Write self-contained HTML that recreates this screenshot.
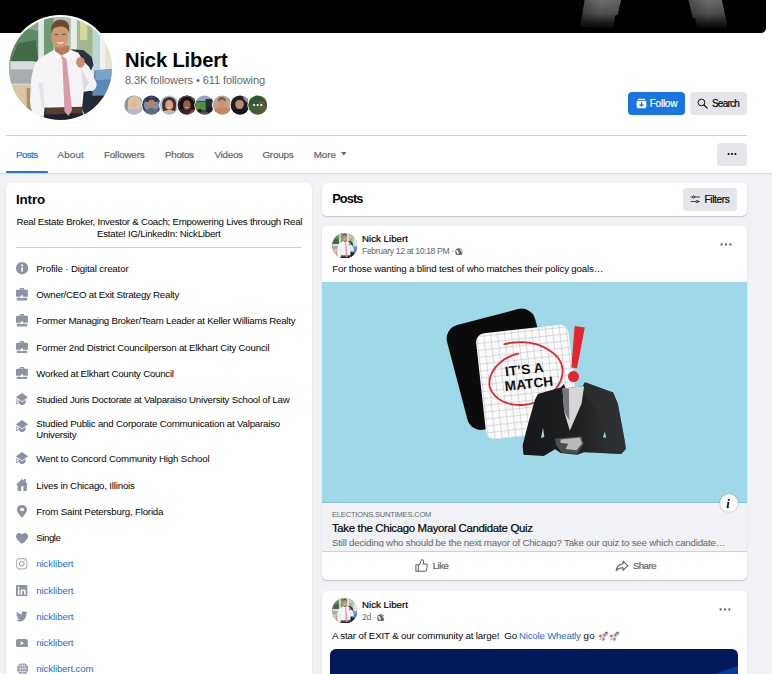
<!DOCTYPE html>
<html lang="en"><head><meta charset="utf-8"><title>Nick Libert | Facebook</title>
<style>
html,body{margin:0;padding:0}
body{width:772px;height:674px;overflow:hidden;background:#f0f2f5;font-family:"Liberation Sans",sans-serif;color:#050505}
.page{position:relative;width:772px;height:674px;overflow:hidden;background:#f0f2f5}
.t{position:absolute;white-space:nowrap;margin:0;padding:0;font-weight:400}
a{text-decoration:none;color:inherit}
.abs{position:absolute}
.card{position:absolute;background:#fff;border-radius:5px;box-shadow:0 1px 1.5px rgba(0,0,0,.2)}
.btn{position:absolute;border-radius:4px;background:#e4e6eb}
.ico{position:absolute;width:13.34px;height:13.34px;left:15.2px}
h1,h2,h3,p,ul,li{margin:0;padding:0;list-style:none}
</style></head><body><div class="page">
<header class="abs" style="left:0;top:0;width:772px;height:173px;background:#fff;box-shadow:0 1px 1px rgba(0,0,0,.1)">
<div class="abs" style="left:0;top:0;width:766px;height:33px;background:#000;border-radius:0 0 5px 0;overflow:hidden">
<svg width="766" height="33" viewBox="0 0 766 33" style="position:absolute;left:0;top:0">
<defs><linearGradient id="lg" x1="0" y1="0" x2="0" y2="1"><stop offset="0" stop-color="#727272"/><stop offset=".5" stop-color="#505050"/><stop offset=".8" stop-color="#1c1c1c"/><stop offset="1" stop-color="#000"/></linearGradient>
<linearGradient id="lh" x1="0" y1="0" x2="1" y2="0"><stop offset="0" stop-color="#000" stop-opacity=".3"/><stop offset=".5" stop-color="#000" stop-opacity="0"/><stop offset="1" stop-color="#000" stop-opacity=".1"/></linearGradient>
<filter id="bl" x="-10%" y="-10%" width="120%" height="120%"><feGaussianBlur stdDeviation=".5"/></filter></defs>
<g filter="url(#bl)"><polygon points="585,-2 621.500,-2 617.600,15 615.200,15.500 613.500,29 580,29" fill="url(#lg)"/><polygon points="585,-2 621.500,-2 617.600,15 615.200,15.500 613.500,29 580,29" fill="url(#lh)"/>
<polygon points="688,-2 721.500,-2 728,29 696.600,29 695.500,18.500 692.700,18" fill="url(#lg)"/><polygon points="688,-2 721.500,-2 728,29 696.600,29 695.500,18.500 692.700,18" fill="url(#lh)"/></g>
</svg></div>
<svg width="0" height="0" style="position:absolute"><defs>
<clipPath id="avc"><circle cx="51.500" cy="51.500" r="51.500"/></clipPath>
<filter id="ab" x="-5%" y="-5%" width="110%" height="110%"><feGaussianBlur stdDeviation="3"/></filter>
<symbol id="avart" viewBox="0 0 103 103"><g clip-path="url(#avc)"><g transform="translate(-9 -9) scale(.17803)">
<rect x="40" y="40" width="610" height="610" fill="#dde6e1"/>
<g filter="url(#ab)">
<polygon points="40,40 225,40 225,300 40,300" fill="#5f8b64"/>
<polygon points="40,40 225,40 225,130 120,110 40,170" fill="#86ad8c"/>
<polygon points="100,200 200,180 215,300 60,300" fill="#3f6a4a"/>
<rect x="215" y="40" width="32" height="260" fill="#dfe7e9"/>
<rect x="247" y="40" width="60" height="260" fill="#6f9a72"/>
<rect x="300" y="40" width="110" height="200" fill="#aebfae"/>
<rect x="398" y="40" width="34" height="280" fill="#e6ecec"/>
<rect x="432" y="60" width="90" height="250" fill="#9db78e"/>
<rect x="450" y="60" width="40" height="120" fill="#d9d79a"/>
<rect x="520" y="90" width="50" height="260" fill="#bcd6d6"/>
<rect x="562" y="100" width="30" height="260" fill="#eef2f0"/>
<rect x="592" y="150" width="60" height="220" fill="#e7e2d3"/>
<rect x="40" y="300" width="150" height="125" fill="#a7adaf"/>
<rect x="60" y="300" width="130" height="45" fill="#d9dddd"/>
<rect x="40" y="430" width="165" height="160" fill="#d9c6a5"/>
<rect x="150" y="450" width="40" height="130" fill="#b78d5c"/>
<polygon points="530,350 640,342 640,492 518,496" fill="#5b8ab8"/>
<polygon points="535,350 640,342 640,400 540,405" fill="#7aa3c9"/>
<polygon points="490,495 650,490 650,650 470,650" fill="#27292d"/>
<rect x="225" y="465" width="40" height="170" fill="#2b2a2a"/>
</g>
<polygon points="398,232 470,238 515,275 525,320 512,350 470,330 440,270" fill="#2b3142"/>
<polygon points="462,440 520,468 522,585 480,612 458,560" fill="#262c3c"/>
<path d="M300,236 L215,288 Q185,330 175,400 L168,520 Q170,580 200,612 L245,625 L250,560 L462,556 L470,470 L528,462 Q550,440 540,415 L500,330 L470,300 L440,252 L400,236 Z" fill="#f4f4f7"/>
<path d="M470,470 L452,330 L500,420 Z" fill="#dcdde3"/>
<path d="M215,420 L235,560 L250,560 L240,420 Z" fill="#e2e3e9"/>
<ellipse cx="452" cy="305" rx="24" ry="30" fill="#c98d70"/>
<polygon points="253,560 462,554 464,592 258,602" fill="#5a3b2c"/>
<polygon points="250,600 466,590 475,650 248,650" fill="#1d2230"/>
<polygon points="310,210 388,210 390,246 346,268 308,246" fill="#b67a5d"/>
<polygon points="338,262 364,257 374,290 405,575 384,606 362,580 350,292" fill="#d99ca8"/>
<polygon points="300,236 346,270 322,292" fill="#fff"/><polygon points="400,236 348,270 384,290" fill="#fff"/>
<ellipse cx="336" cy="160" rx="48" ry="63" fill="#d09774"/>
<path d="M288,140 Q282,80 325,68 Q375,58 388,100 L388,142 Q378,108 350,104 Q310,102 298,118 Z" fill="#6b4932"/>
<path d="M318,192 Q340,210 362,190 Q340,198 318,192Z" fill="#fff"/>
<path d="M306,150h22M348,148h22" stroke="#5a3a2a" stroke-width="5"/>
</g></g></symbol></defs></svg>
<div class="abs" style="left:7px;top:15px;width:107px;height:107px;border-radius:50%;background:#fff"></div>
<svg class="abs" style="left:9px;top:17px" width="103" height="103"><use href="#avart"/></svg>
<h1 class="t" style="left:125.00px;top:47.02px;font-size:20.2px;line-height:26.26px;color:#050505;font-weight:700;letter-spacing:-0.168px;">Nick Libert</h1>
<span class="t" style="left:125.00px;top:72.99px;font-size:11px;line-height:14.3px;color:#65676b;letter-spacing:-0.082px;">8.3K followers • 611 following</span>
<svg class="abs" style="left:122px;top:93px" width="150" height="24" viewBox="122 93 150 24"><clipPath id="fc0"><circle cx="133.8" cy="105" r="9.400"/></clipPath><circle cx="133.8" cy="105" r="10.300" fill="#fff"/><g clip-path="url(#fc0)"><g transform="translate(123.8 95)"><rect width="20" height="20" fill="#8f9197"/><rect x="12" width="8" height="20" fill="#a7a4a3"/><path d="M4 9Q4 1 10.500 1T17 9v6H4z" fill="#dcc59f"/><ellipse cx="10.500" cy="9" rx="3.700" ry="4.600" fill="#e0b79f"/><path d="M1 20q1-6 9.500-6T20 20z" fill="#aebbd3"/></g></g><clipPath id="fc1"><circle cx="151.5" cy="105" r="9.400"/></clipPath><circle cx="151.5" cy="105" r="10.300" fill="#fff"/><g clip-path="url(#fc1)"><g transform="translate(141.5 95)"><rect width="20" height="20" fill="#2b3b7b"/><circle cx="10" cy="10" r="7.600" fill="#7f8fa6"/><rect x="4" y="3" width="12" height="4" fill="#343a45"/><ellipse cx="10" cy="9" rx="3.600" ry="4.200" fill="#b58465"/><path d="M2.500 20q1-7 7.500-7t7.500 7z" fill="#5d6c8a"/></g></g><clipPath id="fc2"><circle cx="169.2" cy="105" r="9.400"/></clipPath><circle cx="169.2" cy="105" r="10.300" fill="#fff"/><g clip-path="url(#fc2)"><g transform="translate(159.2 95)"><rect width="20" height="20" fill="#a9c9e2"/><path d="M3 12Q2 2 10 2t7 10l-1 4H4z" fill="#4b2f25"/><ellipse cx="10" cy="10" rx="4" ry="4.900" fill="#d6a186"/><path d="M7.800 12.300q2.200 1.600 4.400 0-2.200.6-4.400 0z" fill="#fff"/><path d="M1 20q2-5 9-5t9 5z" fill="#c9b7aa"/></g></g><clipPath id="fc3"><circle cx="186.9" cy="105" r="9.400"/></clipPath><circle cx="186.9" cy="105" r="10.300" fill="#fff"/><g clip-path="url(#fc3)"><g transform="translate(176.9 95)"><rect width="20" height="20" fill="#2b2220"/><rect y="0" width="20" height="6" fill="#50473f"/><path d="M3 14Q2 2 10 2t7 12z" fill="#17110f"/><ellipse cx="10" cy="10" rx="3.800" ry="4.800" fill="#94604a"/><path d="M7.800 12.200q2.200 1.700 4.400 0-2.200.5-4.400 0z" fill="#fff"/><path d="M11 20q1-5 9-6v6z" fill="#c3283a"/><path d="M0 20q2-5 9-5l3 5z" fill="#3a2622"/></g></g><clipPath id="fc4"><circle cx="204.6" cy="105" r="9.400"/></clipPath><circle cx="204.6" cy="105" r="10.300" fill="#fff"/><g clip-path="url(#fc4)"><g transform="translate(194.6 95)"><rect width="20" height="20" fill="#8fa5bd"/><rect y="6" width="20" height="14" fill="#37503a"/><rect x="1" y="7" width="11" height="8" fill="#4f9140"/><rect x="11" y="4" width="7" height="11" fill="#2b3038"/><circle cx="15" cy="15.500" r="3.200" fill="#1c1f24"/><circle cx="5" cy="16" r="2.200" fill="#1c1f24"/><rect y="17.500" width="20" height="2.500" fill="#5b5a55"/></g></g><clipPath id="fc5"><circle cx="222.3" cy="105" r="9.400"/></clipPath><circle cx="222.3" cy="105" r="10.300" fill="#fff"/><g clip-path="url(#fc5)"><g transform="translate(212.3 95)"><rect width="20" height="20" fill="#b9a596"/><path d="M0 20q1-8 10-8t10 8z" fill="#c88663"/><ellipse cx="9.500" cy="8" rx="4" ry="4.800" fill="#cf9472"/><path d="M5.500 7Q5.500 2 9.500 2t4 5q-2-2.500-4-2.500T5.500 7z" fill="#7d573f"/></g></g><clipPath id="fc6"><circle cx="240.0" cy="105" r="9.400"/></clipPath><circle cx="240.0" cy="105" r="10.300" fill="#fff"/><g clip-path="url(#fc6)"><g transform="translate(230.0 95)"><rect width="20" height="20" fill="#1d1f25"/><path d="M12 0h8v9q-5-1-8-9z" fill="#8f99a8"/><ellipse cx="9.500" cy="9" rx="4.300" ry="5.200" fill="#bd8b71"/><path d="M5 7Q5 2 9.500 2T14 7q-2-2-4.500-2T5 7z" fill="#24201e"/><path d="M0 20q1-6 9.500-6T20 20z" fill="#14151a"/></g></g><clipPath id="fc7"><circle cx="257.7" cy="105" r="9.400"/></clipPath><circle cx="257.7" cy="105" r="10.300" fill="#fff"/><g clip-path="url(#fc7)"><g transform="translate(247.7 95)"><rect width="20" height="20" fill="#4f8647"/><rect y="9" width="20" height="11" fill="#6d8f5a"/><rect x="11" y="6" width="6" height="9" fill="#a88363"/><rect width="20" height="20" fill="rgba(10,25,10,.42)"/><circle cx="6.400" cy="10" r="1.100" fill="#fff"/><circle cx="10" cy="10" r="1.100" fill="#fff"/><circle cx="13.600" cy="10" r="1.100" fill="#fff"/></g></g></svg>
<a class="btn" style="left:628px;top:92px;width:57px;height:23px;background:#1b74e4"></a>
<svg class="abs" style="left:635.5px;top:97.5px" width="11" height="11" viewBox="0 0 16 16"><path fill="#fff" d="M3.2 1h9.6l1.2 2.4H2zM1 4.4h14V13a2 2 0 0 1-2 2H3a2 2 0 0 1-2-2z"/><path d="M8 6.6v5M5.7 9.6 8 11.9l2.3-2.3" stroke="#1b74e4" stroke-width="1.7" fill="none" stroke-linecap="round" stroke-linejoin="round"/></svg>
<span class="t" style="left:649.70px;top:96.98px;font-size:10px;line-height:13.0px;color:#fff;-webkit-text-stroke:.22px;letter-spacing:-0.234px;">Follow</span>
<a class="btn" style="left:690px;top:92px;width:57px;height:23px"></a>
<svg class="abs" style="left:696.5px;top:98px" width="11" height="11" viewBox="0 0 16 16"><circle cx="6.500" cy="6.500" r="4.900" fill="none" stroke="#050505" stroke-width="1.400"/><path d="M10.200 10.200 14.800 14.800" stroke="#050505" stroke-width="1.700" stroke-linecap="round"/></svg>
<span class="t" style="left:711.90px;top:96.98px;font-size:10px;line-height:13.0px;color:#050505;-webkit-text-stroke:.22px;letter-spacing:-0.748px;">Search</span>
<div class="abs" style="left:6px;top:135px;width:741px;height:1px;background:#ced0d4"></div>
<nav>
<a class="t" style="left:16.00px;top:148.98px;font-size:9.8px;line-height:12.74px;color:#1877f2;-webkit-text-stroke:.22px;letter-spacing:-0.603px;">Posts</a>
<a class="t" style="left:57.50px;top:148.98px;font-size:9.8px;line-height:12.74px;color:#65676b;-webkit-text-stroke:.22px;letter-spacing:0.178px;">About</a>
<a class="t" style="left:104.00px;top:148.98px;font-size:9.8px;line-height:12.74px;color:#65676b;-webkit-text-stroke:.22px;letter-spacing:-0.158px;">Followers</a>
<a class="t" style="left:165.00px;top:148.98px;font-size:9.8px;line-height:12.74px;color:#65676b;-webkit-text-stroke:.22px;letter-spacing:-0.303px;">Photos</a>
<a class="t" style="left:214.50px;top:148.98px;font-size:9.8px;line-height:12.74px;color:#65676b;-webkit-text-stroke:.22px;letter-spacing:-0.264px;">Videos</a>
<a class="t" style="left:262.40px;top:148.98px;font-size:9.8px;line-height:12.74px;color:#65676b;-webkit-text-stroke:.22px;letter-spacing:-0.173px;">Groups</a>
<a class="t" style="left:313.70px;top:148.98px;font-size:9.8px;line-height:12.74px;color:#65676b;-webkit-text-stroke:.22px;letter-spacing:-0.007px;">More</a>
<svg class="abs" style="left:341.4px;top:152.3px" width="5.6" height="3.6" viewBox="0 0 10 6"><path d="M0 0h10L5 6z" fill="#65676b"/></svg>
<div class="abs" style="left:6px;top:171px;width:42px;height:2px;background:#1877f2;border-radius:1px 1px 0 0"></div>
</nav>
<a class="btn" style="left:717px;top:143px;width:30px;height:23px"></a>
<svg class="abs" style="left:727px;top:152px" width="10" height="4" viewBox="0 0 10 4"><circle cx="1.6" cy="2" r="1.05"/><circle cx="5" cy="2" r="1.05"/><circle cx="8.4" cy="2" r="1.05"/></svg>
</header>
<main>
<section class="card" style="left:6px;top:183px;width:306.3px;height:520px">
</section>
<h2 class="t" style="left:16.00px;top:191.00px;font-size:13.4px;line-height:17.42px;color:#050505;font-weight:700;letter-spacing:-0.150px;">Intro</h2>
<p class="t" style="left:16.50px;top:215.98px;font-size:9.7px;line-height:12.61px;color:#050505;letter-spacing:-0.260px;">Real Estate Broker, Investor &amp; Coach; Empowering Lives through Real</p>
<p class="t" style="left:97.00px;top:227.98px;font-size:9.7px;line-height:12.61px;color:#050505;letter-spacing:-0.237px;">Estate! IG/LinkedIn: NickLibert</p>
<div class="abs" style="left:16px;top:247px;width:286px;height:1px;background:#ced0d4"></div>
<ul>
<li><svg class="abs" style="left:15.90px;top:262.30px" width="12.20" height="12.40" viewBox="0.8 0.8 18.4 18.4" preserveAspectRatio="none"><circle cx="10" cy="10" r="9.2" fill="#8c94a3"/><rect x="8.800" y="8.700" width="2.400" height="6.500" rx=".5" fill="#fff"/><circle cx="10" cy="5.800" r="1.500" fill="#fff"/></svg><span class="t" style="left:36.30px;top:262.98px;font-size:9.7px;line-height:12.61px;color:#050505;letter-spacing:-0.146px;">Profile · Digital creator</span></li>
<li><svg class="abs" style="left:16.10px;top:288.10px" width="11.90" height="12.60" viewBox="1 0.5 18 19" preserveAspectRatio="none"><path fill="#8c94a3" d="M6.400 3.200V2.300A1.800 1.800 0 0 1 8.200.5h3.600a1.800 1.800 0 0 1 1.800 1.800v.9h3.600A1.800 1.800 0 0 1 19 5v7.800c0 .6-.4 1-1 1h-6.200v-1.900H8.200v1.900H2c-.6 0-1-.4-1-1V5a1.800 1.800 0 0 1 1.800-1.800zm1.800 0h3.600V2.300H8.200z"/><path fill="#8c94a3" d="M2 15.100h6.200v.8h3.600v-.8H18v2.600a1.800 1.800 0 0 1-1.800 1.800H3.800A1.800 1.800 0 0 1 2 17.700z"/></svg><span class="t" style="left:36.30px;top:288.98px;font-size:9.7px;line-height:12.61px;color:#050505;letter-spacing:-0.241px;">Owner/CEO at Exit Strategy Realty</span></li>
<li><svg class="abs" style="left:16.10px;top:314.20px" width="11.90" height="12.60" viewBox="1 0.5 18 19" preserveAspectRatio="none"><path fill="#8c94a3" d="M6.400 3.200V2.300A1.800 1.800 0 0 1 8.200.5h3.600a1.800 1.800 0 0 1 1.800 1.800v.9h3.600A1.800 1.800 0 0 1 19 5v7.800c0 .6-.4 1-1 1h-6.200v-1.900H8.200v1.900H2c-.6 0-1-.4-1-1V5a1.800 1.800 0 0 1 1.800-1.800zm1.800 0h3.600V2.300H8.200z"/><path fill="#8c94a3" d="M2 15.100h6.200v.8h3.600v-.8H18v2.600a1.800 1.800 0 0 1-1.800 1.800H3.800A1.800 1.800 0 0 1 2 17.700z"/></svg><span class="t" style="left:36.30px;top:314.98px;font-size:9.7px;line-height:12.61px;color:#050505;letter-spacing:-0.251px;">Former Managing Broker/Team Leader at Keller Williams Realty</span></li>
<li><svg class="abs" style="left:16.10px;top:340.50px" width="11.90" height="12.60" viewBox="1 0.5 18 19" preserveAspectRatio="none"><path fill="#8c94a3" d="M6.400 3.200V2.300A1.800 1.800 0 0 1 8.200.5h3.600a1.800 1.800 0 0 1 1.800 1.800v.9h3.600A1.800 1.800 0 0 1 19 5v7.800c0 .6-.4 1-1 1h-6.200v-1.900H8.200v1.900H2c-.6 0-1-.4-1-1V5a1.800 1.800 0 0 1 1.800-1.800zm1.800 0h3.600V2.300H8.200z"/><path fill="#8c94a3" d="M2 15.100h6.200v.8h3.600v-.8H18v2.600a1.800 1.800 0 0 1-1.800 1.800H3.800A1.800 1.800 0 0 1 2 17.700z"/></svg><span class="t" style="left:36.30px;top:341.98px;font-size:9.7px;line-height:12.61px;color:#050505;letter-spacing:-0.208px;">Former 2nd District Councilperson at Elkhart City Council</span></li>
<li><svg class="abs" style="left:16.10px;top:366.80px" width="11.90" height="12.60" viewBox="1 0.5 18 19" preserveAspectRatio="none"><path fill="#8c94a3" d="M6.400 3.200V2.300A1.800 1.800 0 0 1 8.200.5h3.600a1.800 1.800 0 0 1 1.800 1.800v.9h3.600A1.800 1.800 0 0 1 19 5v7.800c0 .6-.4 1-1 1h-6.200v-1.900H8.200v1.900H2c-.6 0-1-.4-1-1V5a1.800 1.800 0 0 1 1.800-1.800zm1.800 0h3.600V2.300H8.200z"/><path fill="#8c94a3" d="M2 15.100h6.200v.8h3.600v-.8H18v2.600a1.800 1.800 0 0 1-1.800 1.800H3.800A1.800 1.800 0 0 1 2 17.700z"/></svg><span class="t" style="left:36.30px;top:367.98px;font-size:9.7px;line-height:12.61px;color:#050505;letter-spacing:-0.241px;">Worked at Elkhart County Council</span></li>
<li><svg class="abs" style="left:15.90px;top:393.20px" width="12.10" height="12.20" viewBox="0.9 0.9 18.2 18.3" preserveAspectRatio="none"><path fill="#8c94a3" d="M10 .9 19.100 7.200 10 13.500.9 7.200z"/><path fill="#8c94a3" d="M4.600 11.200 10 14.900l5.400-3.700v4.300c0 .3-.1.500-.3.700-1.500 1.800-3.200 3-5.100 3s-3.600-1.200-5.100-3a1 1 0 0 1-.3-.7z"/><path fill="#8c94a3" d="M1.600 9.400l1.300.9v4.200l.7 3.200H.9l.7-3.200z"/></svg><span class="t" style="left:36.30px;top:393.98px;font-size:9.7px;line-height:12.61px;color:#050505;letter-spacing:-0.240px;">Studied Juris Doctorate at Valparaiso University School of Law</span></li>
<li><svg class="abs" style="left:15.90px;top:420.20px" width="12.10" height="12.20" viewBox="0.9 0.9 18.2 18.3" preserveAspectRatio="none"><path fill="#8c94a3" d="M10 .9 19.100 7.200 10 13.500.9 7.200z"/><path fill="#8c94a3" d="M4.600 11.200 10 14.900l5.400-3.700v4.300c0 .3-.1.500-.3.700-1.500 1.800-3.200 3-5.100 3s-3.600-1.200-5.100-3a1 1 0 0 1-.3-.7z"/><path fill="#8c94a3" d="M1.600 9.400l1.300.9v4.200l.7 3.200H.9l.7-3.200z"/></svg><span class="t" style="left:36.30px;top:417.98px;font-size:9.7px;line-height:12.61px;color:#050505;letter-spacing:-0.203px;">Studied Public and Corporate Communication at Valparaiso</span></li>
<li><span class="t" style="left:36.30px;top:428.98px;font-size:9.7px;line-height:12.61px;color:#050505;letter-spacing:-0.253px;">University</span></li>
<li><svg class="abs" style="left:15.90px;top:452.00px" width="12.10" height="12.20" viewBox="0.9 0.9 18.2 18.3" preserveAspectRatio="none"><path fill="#8c94a3" d="M10 .9 19.100 7.200 10 13.500.9 7.200z"/><path fill="#8c94a3" d="M4.600 11.200 10 14.900l5.400-3.700v4.300c0 .3-.1.500-.3.700-1.500 1.800-3.200 3-5.100 3s-3.600-1.200-5.100-3a1 1 0 0 1-.3-.7z"/><path fill="#8c94a3" d="M1.600 9.400l1.300.9v4.200l.7 3.200H.9l.7-3.200z"/></svg><span class="t" style="left:36.30px;top:452.98px;font-size:9.7px;line-height:12.61px;color:#050505;letter-spacing:-0.160px;">Went to Concord Community High School</span></li>
<li><svg class="abs" style="left:15.90px;top:479.00px" width="12.10" height="11.90" viewBox="0.9 1.6 18.2 16.5" preserveAspectRatio="none"><path fill="#8c94a3" d="M10 1.600.9 9.600h2.400v8.500h5.400v-6.300h3.400v6.300h5V9.600h2L15.600 6V1.700h-2.500v2.200z"/></svg><span class="t" style="left:36.30px;top:479.98px;font-size:9.7px;line-height:12.61px;color:#050505;letter-spacing:-0.192px;">Lives in Chicago, Illinois</span></li>
<li><svg class="abs" style="left:17.00px;top:505.00px" width="10.10" height="12.80" viewBox="3.8 1.2 12.4 17.6" preserveAspectRatio="none"><path fill="#8c94a3" fill-rule="evenodd" d="M10 1.200c-3.600 0-6.200 2.700-6.200 6.100 0 4.200 4.300 8.900 6.200 11.500 1.900-2.600 6.200-7.300 6.200-11.500 0-3.400-2.600-6.100-6.200-6.100zm0 3.700a2.500 2.500 0 1 1 0 5 2.500 2.500 0 0 1 0-5z"/></svg><span class="t" style="left:36.30px;top:505.98px;font-size:9.7px;line-height:12.61px;color:#050505;letter-spacing:-0.182px;">From Saint Petersburg, Florida</span></li>
<li><svg class="abs" style="left:15.90px;top:533.00px" width="12.10" height="10.80" viewBox="1.3 2.2 17.4 15.6" preserveAspectRatio="none"><path fill="#8c94a3" d="M10 17.800C7 15.500 1.300 11.600 1.300 6.900c0-2.700 2-4.700 4.500-4.700 1.700 0 3.200.9 4.200 2.300 1-1.400 2.500-2.300 4.200-2.300 2.500 0 4.500 2 4.500 4.700 0 4.700-5.700 8.600-8.700 10.900z"/></svg><span class="t" style="left:36.30px;top:531.98px;font-size:9.7px;line-height:12.61px;color:#050505;letter-spacing:-0.456px;">Single</span></li>
<li><svg class="abs" style="left:16.30px;top:558.30px" width="11.40" height="11.40" viewBox="1.2 1.2 17.6 17.6" preserveAspectRatio="none"><rect x="2.100" y="2.100" width="15.800" height="15.800" rx="4.200" fill="none" stroke="#b3b7bf" stroke-width="1.800"/><circle cx="10" cy="10" r="3.700" fill="none" stroke="#8c94a3" stroke-width="1.500"/><circle cx="14.600" cy="5.400" r=".9" fill="#b3b7bf"/></svg><a class="t" style="left:36.30px;top:557.98px;font-size:9.7px;line-height:12.61px;color:#216fdb;letter-spacing:-0.113px;">nicklibert</a></li>
<li><svg class="abs" style="left:16.30px;top:584.50px" width="11.40" height="11.70" viewBox="1.5 1.5 17 17" preserveAspectRatio="none"><rect x="1.500" y="1.500" width="17" height="17" rx="2" fill="#8c94a3"/><rect x="4.300" y="8" width="2.300" height="7.600" fill="#fff"/><circle cx="5.450" cy="5.500" r="1.350" fill="#fff"/><path fill="#fff" d="M8.500 8h2.200v1c.5-.8 1.400-1.300 2.500-1.300 2 0 2.800 1.300 2.800 3.400v4.500h-2.300v-4c0-1.100-.3-1.900-1.300-1.900-1.100 0-1.600.8-1.600 2v3.900H8.500z"/></svg><a class="t" style="left:36.30px;top:584.98px;font-size:9.7px;line-height:12.61px;color:#216fdb;letter-spacing:-0.113px;">nicklibert</a></li>
<li><svg class="abs" style="left:15.90px;top:611.40px" width="11.50" height="10.40" viewBox="1.2 2.3 17.7 14.8" preserveAspectRatio="none"><path fill="#8c94a3" d="M18.900 4.500c-.6.300-1.300.5-2 .6.700-.5 1.300-1.200 1.500-2-.7.400-1.500.7-2.300.9a3.600 3.600 0 0 0-6.200 3.300C6.900 7.100 4.200 5.700 2.400 3.500c-.9 1.600-.5 3.700 1.100 4.800-.6 0-1.100-.2-1.600-.5 0 1.800 1.200 3.300 2.900 3.600-.5.200-1.100.2-1.600.1.500 1.500 1.800 2.500 3.400 2.500A7.300 7.300 0 0 1 1.200 15.500c1.600 1 3.500 1.600 5.600 1.600 6.700 0 10.300-5.500 10.300-10.300v-.5c.7-.5 1.300-1.100 1.800-1.800z"/></svg><a class="t" style="left:36.30px;top:610.98px;font-size:9.7px;line-height:12.61px;color:#216fdb;letter-spacing:-0.113px;">nicklibert</a></li>
<li><svg class="abs" style="left:16.00px;top:638.80px" width="11.90" height="8.30" viewBox="1.4 4 17.2 12.4" preserveAspectRatio="none"><rect x="1.400" y="4" width="17.200" height="12.400" rx="3" fill="#8c94a3"/><path d="M8.300 7.500v5.400l4.500-2.700z" fill="#fff"/></svg><a class="t" style="left:36.30px;top:636.98px;font-size:9.7px;line-height:12.61px;color:#216fdb;letter-spacing:-0.113px;">nicklibert</a></li>
<li><svg class="abs" style="left:16.50px;top:663.30px" width="11.40" height="11.40" viewBox="1.4 1.4 17.2 17.2" preserveAspectRatio="none"><circle cx="10" cy="10" r="8.600" fill="#8c94a3"/><g stroke="#fff" stroke-width="1" fill="none" opacity=".8"><ellipse cx="10" cy="10" rx="3.600" ry="8.600"/><path d="M1.400 10h17.200M2.600 5.800h14.800M2.600 14.200h14.800M10 1.400v17.200"/></g></svg><a class="t" style="left:36.30px;top:662.98px;font-size:9.7px;line-height:12.61px;color:#216fdb;letter-spacing:-0.158px;">nicklibert.com</a></li>
</ul>
<section class="card" style="left:322px;top:183px;width:425px;height:32.7px"></section>
<h2 class="t" style="left:332.20px;top:190.99px;font-size:12.8px;line-height:16.64px;color:#050505;font-weight:700;letter-spacing:-0.892px;">Posts</h2>
<a class="btn" style="left:683px;top:188px;width:54px;height:22.500px"></a>
<svg class="abs" style="left:689.500px;top:194px" width="10.500" height="10.500" viewBox="0 0 16 16" fill="none" stroke="#050505" stroke-width="1.100" stroke-linecap="round"><path d="M1.500 4.500h2M8.500 4.500h6M1.500 11.500h7M13 11.500h1.500"/><circle cx="5.600" cy="4.500" r="1.700"/><circle cx="10.800" cy="11.500" r="1.700"/></svg>
<span class="t" style="left:704.60px;top:192.98px;font-size:10px;line-height:13.0px;color:#050505;-webkit-text-stroke:.22px;letter-spacing:-0.362px;">Filters</span>
<article class="card" style="left:322px;top:226px;width:425px;height:354.300px;overflow:hidden">
</article>
<svg class="abs" style="left:331.7px;top:232.7px" width="25.6" height="25.6"><use href="#avart"/></svg><div class="abs" style="left:331.7px;top:232.7px;width:25.6px;height:25.6px;border-radius:50%;box-shadow:inset 0 0 0 .5px rgba(0,0,0,.12)"></div>
<h3 class="t" style="left:362.00px;top:232.98px;font-size:9.7px;line-height:12.61px;color:#050505;-webkit-text-stroke:.22px;letter-spacing:0.012px;">Nick Libert</h3>
<span class="t" style="left:362.00px;top:246.01px;font-size:8.67px;line-height:11.27px;color:#65676b;letter-spacing:-0.367px;">February 12 at 10:18 PM · </span>
<svg class="abs" style="left:454.9px;top:247.7px" width="7.800" height="7.800" viewBox="0 0 16 16"><circle cx="8" cy="8" r="7.500" fill="#65676b"/><path fill="#fff" d="M3.500 4.200c1 .3 1.600 1.100 2.700 1.400.9.300 1 1.200.5 1.900-.5.700-.2 1.400.5 1.900.8.600.6 1.600.2 2.500-.3.700-.9 1.300-1.500 1.100-.5-.2-.5-1-.6-1.700-.1-.8-.9-1.100-1.300-1.800-.5-.8-.3-1.500-.9-2.200-.5-.6-1-.9-1.200-1.300.3-.7.900-1.400 1.600-1.800zM9.800 1.300c.2.700-.3 1.200.2 1.800.5.600 1.400.5 1.700 1.200.3.700-.4 1.100-.2 1.800.2.600 1 .7 1.500 1.200.6.600.4 1.400 1.100 1.700.4.200.8-.1 1.100-.4-.2-3.200-2.300-5.900-5.400-7.300z"/></svg>
<svg class="abs" style="left:719.500px;top:243px" width="12" height="3" viewBox="0 0 12 3" fill="#65676b"><circle cx="1.600" cy="1.500" r="1.150"/><circle cx="6" cy="1.500" r="1.150"/><circle cx="10.400" cy="1.500" r="1.150"/></svg>
<p class="t" style="left:332.20px;top:262.98px;font-size:9.7px;line-height:12.61px;color:#050505;letter-spacing:-0.163px;">For those wanting a blind test of who matches their policy goals…</p>
<svg class="abs" style="left:322px;top:282.300px" width="425" height="221.100" viewBox="322 282.300 425 221.100">
<rect x="322" y="282" width="425" height="222" fill="#9fd9e9"/>
<rect x="-45.500" y="-54" width="91" height="108" rx="14" fill="#0b0b0b" transform="translate(501.300 369.600) rotate(-14.700)"/>
<g transform="translate(527.250 382.300) rotate(-6.300)">
<defs><pattern id="grid" width="6.900" height="6.900" patternUnits="userSpaceOnUse" x="-44.500" y="-50"><path d="M6.900 0V6.900H0" fill="none" stroke="#a6a9b1" stroke-width=".8"/></pattern><clipPath id="pc"><rect x="-46.500" y="-53.300" width="93" height="106.600" rx="9"/></clipPath></defs>
<rect x="-46.500" y="-53.300" width="93" height="106.600" rx="9" fill="#fbfbfb"/>
<rect x="-46.500" y="-53.300" width="93" height="106.600" fill="url(#grid)" clip-path="url(#pc)"/>
</g>
<path d="M504.3,344.5 L507.5,343.8 L510.7,343.2 L513.9,342.8 L517.0,342.6 L520.0,342.5 L523.0,342.5 L525.8,342.7 L528.5,342.9 L531.2,343.4 L533.7,343.9 L536.1,344.5 L538.5,345.2 L540.7,346.1 L542.8,347.0 L544.8,347.9 L546.7,349.0 L548.4,350.1 L550.1,351.2 L551.8,352.4 L553.3,353.6 L554.9,354.9 L556.3,356.2 L557.5,357.6 L558.7,359.1 L559.7,360.7 L560.5,362.3 L561.3,364.0 L561.8,365.8 L562.2,367.5 L562.5,369.4 L562.6,371.2 L562.5,373.1 L562.3,375.0 L562.0,376.9 L561.4,378.7 L560.8,380.6 L560.0,382.5 L559.0,384.3 L557.9,386.1 L556.7,387.9 L555.3,389.6 L553.8,391.2 L552.2,392.8 L550.5,394.3 L548.7,395.8 L546.8,397.1 L544.7,398.4 L542.7,399.6 L540.5,400.7 L538.3,401.6 L536.0,402.5 L533.7,403.3 L531.3,403.9 L528.9,404.4 L526.5,404.8 L524.2,405.1 L521.8,405.3 L519.4,405.3 L517.0,405.2 L514.7,405.0 L512.5,404.7 L510.3,404.3 L508.1,403.7 L506.1,403.0 L504.1,402.2 L502.2,401.3 L500.4,400.3 L498.7,399.2 L497.1,398.0 L495.7,396.7 L494.3,395.3 L493.2,393.9 L492.1,392.3 L491.2,390.7 L490.4,389.0 L489.8,387.3 L489.4,385.5 L489.4,383.7 L489.5,381.8 L489.7,379.9 L490.1,378.1 L490.7,376.3 L491.4,374.5 L492.2,372.7 L493.2,371.0 L494.3,369.3 L495.5,367.7 L496.8,366.1 L498.3,364.6 L499.8,363.2 L501.4,361.9 L503.1,360.6 L504.8,359.4 L506.7,358.4 L508.5,357.4 L510.4,356.5 L512.4,355.7 L514.4,355.0 L516.3,354.5 L518.3,354.0" fill="none" stroke="#e3262d" stroke-width="1.800" stroke-linecap="round" stroke-linejoin="round"/>
<g transform="rotate(-6.500 526 377)" font-family="Liberation Sans, sans-serif" font-weight="700" font-size="13.600" letter-spacing=".15" fill="#111" text-anchor="middle"><text x="525.200" y="374.300">IT’S A</text><text x="528.200" y="388.900">MATCH</text></g>
<defs><linearGradient id="sg" x1="0" y1="0" x2="1" y2="0"><stop offset="0" stop-color="#161718"/><stop offset=".55" stop-color="#1f2022"/><stop offset="1" stop-color="#343537"/></linearGradient></defs>
<polygon points="563.9,384.3 560.5,387.7 537.8,394.4 534.9,400.3 527.7,425.6 522.6,445.8 523.5,455.0 543.7,456.2 555.1,449.5 560.5,453.4 577.4,455.0 584.1,452.5 621.1,454.2 625.9,449.2 624.5,439.9 617.8,403.7 613.1,392.7 584.9,382.6 582.4,386.8 565.6,388.5" fill="url(#sg)"/>
<polygon points="584.9,382.6 613.1,392.7 617.8,403.7 624.5,439.9 625.9,449.2 621.1,454.2 604.3,453.4 604.3,434.0 597.6,412.1 584.1,393.6" fill="#2e2f31" opacity=".7"/>
<polygon points="562.5,388.9 584.1,386.5 581.6,403.7 569.8,431.0 564.2,412.1" fill="#d6d6d9"/>
<polygon points="562.5,388.9 568.9,388.9 569.3,420.5 564.2,412.1" fill="#77787b"/>
<polygon points="555.1,438.7 581.6,436.5 583.8,444.1 577.4,454.2 561.4,452.9 555.8,444.9" fill="#4c4d4f"/>
<polygon points="560.5,439.9 579.9,437.7 582.1,443.8 576.5,450.5 565.6,449.2 568.1,444.1 560.5,443.3" fill="#b9b9bb"/>
<polygon points="543.0,428.1 544.4,437.4 541.0,438.2" fill="#9fd9e9"/><polygon points="604.6,432.0 606.3,437.7 603.0,437.7" fill="#9fd9e9"/>
<path d="M574.700 326.200 L584.800 327.800 L577 368.600 L571.300 367.900 Z" fill="#e3262d"/>
<circle cx="573.500" cy="376.900" r="5.500" fill="#e3262d"/>
<rect x="322" y="502.600" width="425" height=".8" fill="#7fb9cd"/>
</svg>
<div class="abs" style="left:322px;top:503.400px;width:425px;height:48.600px;background:#f0f2f5;border-bottom:1px solid #ced0d4;box-sizing:border-box"></div>
<span class="t" style="left:332.00px;top:509.98px;font-size:7.5px;line-height:9.75px;color:#65676b;letter-spacing:-0.170px;">ELECTIONS.SUNTIMES.COM</span>
<h3 class="t" style="left:332.00px;top:520.99px;font-size:11.4px;line-height:14.82px;color:#050505;-webkit-text-stroke:.22px;letter-spacing:-0.330px;">Take the Chicago Mayoral Candidate Quiz</h3>
<div class="abs" style="left:330px;top:536px;width:400px;height:11px;overflow:hidden">
<p class="t" style="left:2.00px;top:0.98px;font-size:9.7px;line-height:12.61px;color:#65676b;letter-spacing:-0.200px;">Still deciding who should be the next mayor of Chicago? Take our quiz to see which candidate…</p>
</div>
<div class="abs" style="left:719.500px;top:494.400px;width:18px;height:18px;border-radius:50%;background:#fff;box-shadow:0 0 2px rgba(0,0,0,.35)"></div>
<span class="t" style="left:726.30px;top:495.99px;font-size:12.5px;line-height:16.25px;color:#050505;font-weight:700;font-family:'Liberation Serif',serif;font-style:italic;">i</span>
<svg class="abs" style="left:414.100px;top:558px" width="15.200" height="15.200" viewBox="0 0 20 20" fill="none" stroke="#606266" stroke-width="1.350" stroke-linejoin="round"><path d="M2.500 9h3.200v8.500H2.500z"/><path d="M5.700 9.600c1.800-1 3.200-2.800 3.400-5.300.1-1.300.7-2 1.600-2 1.200 0 1.900 1 1.900 2.500 0 1.100-.3 2.200-.7 3.200h4c1 0 1.700.8 1.600 1.800l-.8 5.400c-.2 1.300-1.200 2.300-2.600 2.300H8.500c-1 0-1.900-.3-2.800-.8"/></svg>
<span class="t" style="left:432.70px;top:559.98px;font-size:9.6px;line-height:12.48px;color:#65676b;-webkit-text-stroke:.22px;letter-spacing:-0.452px;">Like</span>
<svg class="abs" style="left:614.700px;top:558.800px" width="14" height="14" viewBox="0 0 20 20" fill="none" stroke="#606266" stroke-width="1.500" stroke-linejoin="round"><path d="M11.500 3.200 18.300 9.700l-6.800 6.500v-3.700c-4.300-.2-7.300 1.100-9.800 4.300.5-5.200 3.600-9.200 9.800-9.900z"/></svg>
<span class="t" style="left:632.90px;top:559.98px;font-size:9.6px;line-height:12.48px;color:#65676b;-webkit-text-stroke:.22px;letter-spacing:-0.502px;">Share</span>
<article class="card" style="left:322px;top:591px;width:425px;height:120px;border-radius:5px 5px 0 0"></article>
<svg class="abs" style="left:331.6px;top:597.5px" width="25.6" height="25.6"><use href="#avart"/></svg><div class="abs" style="left:331.6px;top:597.5px;width:25.6px;height:25.6px;border-radius:50%;box-shadow:inset 0 0 0 .5px rgba(0,0,0,.12)"></div>
<h3 class="t" style="left:362.00px;top:598.98px;font-size:9.7px;line-height:12.61px;color:#050505;-webkit-text-stroke:.22px;letter-spacing:0.012px;">Nick Libert</h3>
<span class="t" style="left:362.00px;top:612.01px;font-size:8.67px;line-height:11.27px;color:#65676b;letter-spacing:-0.284px;">2d · </span>
<svg class="abs" style="left:376.5px;top:613.7px" width="7.800" height="7.800" viewBox="0 0 16 16"><circle cx="8" cy="8" r="7.500" fill="#65676b"/><path fill="#fff" d="M3.500 4.200c1 .3 1.600 1.100 2.700 1.400.9.300 1 1.200.5 1.900-.5.700-.2 1.400.5 1.900.8.600.6 1.600.2 2.500-.3.700-.9 1.300-1.500 1.100-.5-.2-.5-1-.6-1.700-.1-.8-.9-1.100-1.300-1.800-.5-.8-.3-1.500-.9-2.200-.5-.6-1-.9-1.200-1.300.3-.7.900-1.400 1.600-1.800zM9.800 1.300c.2.700-.3 1.200.2 1.800.5.600 1.400.5 1.700 1.200.3.700-.4 1.100-.2 1.800.2.600 1 .7 1.500 1.200.6.600.4 1.400 1.100 1.700.4.200.8-.1 1.100-.4-.2-3.200-2.300-5.900-5.400-7.300z"/></svg>
<svg class="abs" style="left:719.200px;top:607.900px" width="12" height="3" viewBox="0 0 12 3" fill="#65676b"><circle cx="1.600" cy="1.500" r="1.150"/><circle cx="6" cy="1.500" r="1.150"/><circle cx="10.400" cy="1.500" r="1.150"/></svg>
<p class="t" style="left:332.00px;top:629.98px;font-size:9.7px;line-height:12.61px;color:#050505;letter-spacing:-0.136px;white-space:pre;">A star of EXIT &amp; our community at large!  Go </p>
<a class="t" style="left:519.00px;top:629.98px;font-size:9.7px;line-height:12.61px;color:#216fdb;letter-spacing:-0.208px;">Nicole Wheatly</a>
<span class="t" style="left:583.50px;top:629.98px;font-size:9.7px;line-height:12.61px;color:#050505;letter-spacing:0.259px;">go</span>
<svg class="abs" style="left:598px;top:630.500px" width="10.500" height="10.500" viewBox="0 0 20 20"><path d="M18.500 1.500c-5-.3-9 2-11.500 6.500l-2.500 4 3.500 3.500 4-2.500c4.500-2.500 6.800-6.500 6.500-11.500z" fill="#c9d3dc"/><path d="M18.500 1.500c-2.300-.1-4.300.3-6 1.200l4.800 4.800c.9-1.700 1.300-3.700 1.200-6z" fill="#e0473c"/><circle cx="12.500" cy="7.500" r="2" fill="#3b88c3"/><path d="M7.500 7.300 3 7.800 1 11l4 .5zM12.700 12.500l-.5 4.500L9 19l-.5-4z" fill="#e0473c"/><path d="M4.500 13 2 18l5-2.500z" fill="#f4a62a"/></svg>
<svg class="abs" style="left:608.5px;top:630.500px" width="10.500" height="10.500" viewBox="0 0 20 20"><path d="M18.500 1.500c-5-.3-9 2-11.500 6.500l-2.500 4 3.500 3.500 4-2.500c4.500-2.500 6.800-6.500 6.500-11.500z" fill="#c9d3dc"/><path d="M18.500 1.500c-2.300-.1-4.300.3-6 1.200l4.800 4.800c.9-1.700 1.300-3.700 1.200-6z" fill="#e0473c"/><circle cx="12.500" cy="7.500" r="2" fill="#3b88c3"/><path d="M7.500 7.300 3 7.800 1 11l4 .5zM12.700 12.500l-.5 4.500L9 19l-.5-4z" fill="#e0473c"/><path d="M4.500 13 2 18l5-2.500z" fill="#f4a62a"/></svg>
<div class="abs" style="left:330px;top:649px;width:408px;height:40px;border-radius:6px 6px 0 0;background:#021a5c;overflow:hidden"><svg width="408" height="40" viewBox="0 0 408 40" style="position:absolute;left:0;top:0"><polygon points="382,26 408,17 408,40 340,40" fill="#0c3a9a"/></svg></div>
</main>
</div></body></html>
